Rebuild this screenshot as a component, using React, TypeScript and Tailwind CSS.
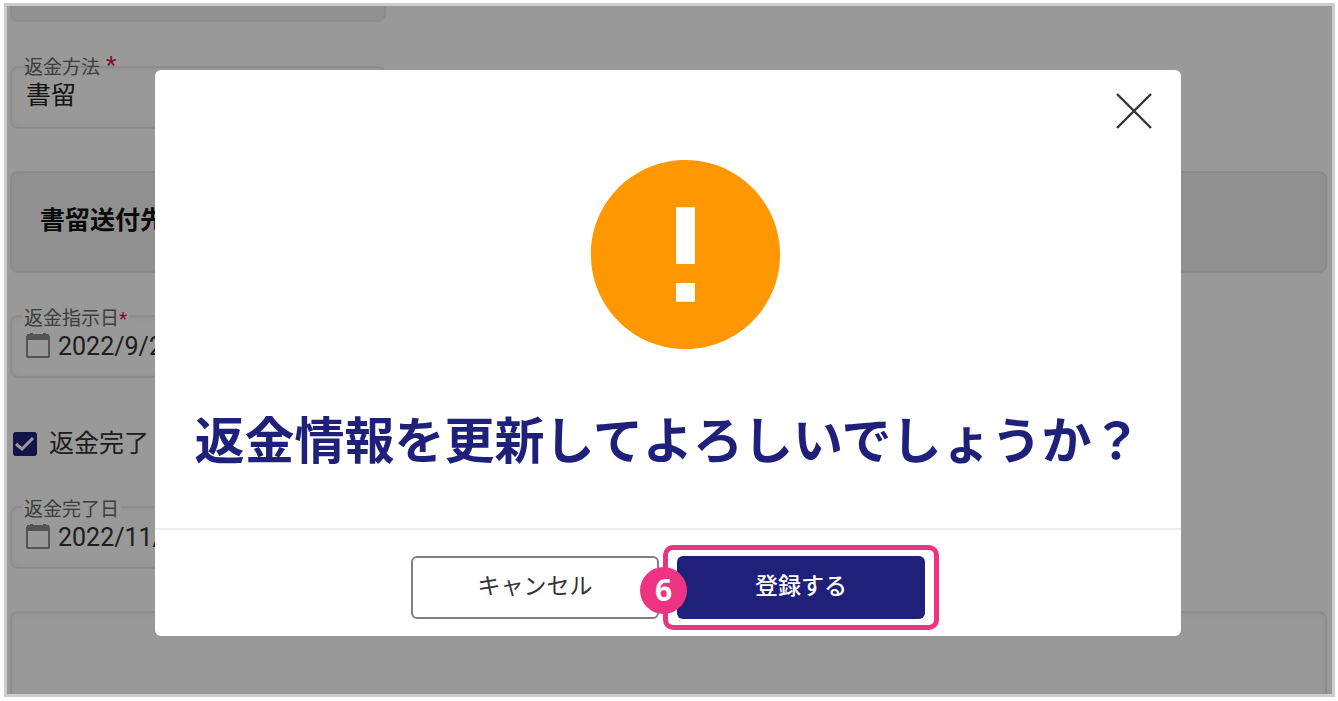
import { ReactNode } from 'react';
import { MdError } from 'react-icons/md';

interface FieldProps {
  id: string;
  label: string;
  value: string;
  required?: boolean;
}

function CalendarIcon() {
  return (
    <svg viewBox="0 0 24 28" className="h-7 w-6 shrink-0" fill="none" aria-hidden="true">
      <path d="M4 0h3v3H4zM17 0h3v3h-3z" fill="#8c8c8c" />
      <rect x="1" y="3" width="22" height="21" rx="1" stroke="#8c8c8c" strokeWidth="2" />
      <path d="M1 1h22v6H1z" fill="#8c8c8c" />
    </svg>
  );
}

function TextField({ id, label, value, required }: FieldProps) {
  return (
    <div className="relative flex h-[63px] w-[376px] items-center rounded-lg border-2 border-[#ebebeb] px-3.5 pb-1 shadow-[inset_0_0_6px_rgba(0,0,0,0.06)]">
      <label
        htmlFor={id}
        className="absolute -top-3 left-3 flex gap-1.5 text-[19px] leading-6 text-[#666]"
      >
        {label}
        {required && <span className="text-2xl leading-[18px] text-[#d8183c]">*</span>}
      </label>
      <input
        id={id}
        defaultValue={value}
        className="min-w-0 flex-1 bg-transparent text-[25px] leading-8 text-[#222] outline-none"
      />
    </div>
  );
}

function DateField({ id, label, value, required }: FieldProps) {
  return (
    <div className="relative flex h-[63px] w-[376px] items-center gap-2 rounded-lg border-2 border-[#ebebeb] px-3.5 shadow-[inset_0_0_6px_rgba(0,0,0,0.06)]">
      <label
        htmlFor={id}
        className="absolute -top-2.5 left-2.5 bg-white px-0.5 text-[19px] leading-6 text-[#666]"
      >
        {label}
        {required && <span className="text-[#d8183c]">*</span>}
      </label>
      <CalendarIcon />
      <input
        id={id}
        defaultValue={value}
        className="min-w-0 flex-1 bg-transparent text-[25px] leading-8 text-[#333] outline-none"
      />
    </div>
  );
}

function Checkbox() {
  return (
    <span className="relative h-6 w-6">
      <input
        type="checkbox"
        defaultChecked
        className="block h-6 w-6 appearance-none rounded-[3px] bg-[#1f207a]"
      />
      <svg viewBox="0 0 24 24" className="pointer-events-none absolute inset-0" fill="none">
        <path d="M3 12l6 5L20 6" stroke="#fff" strokeWidth="3" />
      </svg>
    </span>
  );
}

function RefundForm() {
  return (
    <form className="flex flex-col pr-[5px] pl-[3px]">
      <div className="h-4 w-[376px] rounded-b-lg border-2 border-t-0 border-[#ebebeb] bg-[#f2f2f2]" />
      <div className="mt-11">
        <TextField id="method" label="返金方法" value="書留" required />
      </div>
      <div className="mt-[42px] flex h-[102px] items-center rounded-lg border-2 border-[#e6e6e6] bg-[#f0f0f0] px-7 pb-0.5">
        <h2 className="text-[25px] font-bold text-[#111]">書留送付先</h2>
      </div>
      <div className="mt-[42px]">
        <DateField id="ordered" label="返金指示日" value="2022/9/27" required />
      </div>
      <label className="mt-[46px] flex h-10 items-center gap-3 px-[3px] text-[25px] text-[#333]">
        <Checkbox />
        返金完了
      </label>
      <div className="mt-[42px]">
        <DateField id="completed" label="返金完了日" value="2022/11/10" />
      </div>
      <textarea
        aria-label="備考"
        className="mt-[42px] h-40 w-full resize-none rounded-lg border-2 border-[#ebebeb] shadow-[inset_0_0_6px_rgba(0,0,0,0.06)]"
      />
    </form>
  );
}

function Highlight({ step, children }: { step: number; children: ReactNode }) {
  return (
    <div className="relative">
      {children}
      <div className="pointer-events-none absolute -inset-x-[14px] -inset-y-[11px] rounded-[10px] border-5 border-[#ec3483]" />
      <span className="absolute top-[11px] -left-[37px] flex h-[47px] w-[47px] items-center justify-center rounded-full bg-[#ec3483] pb-0.5 font-['Open_Sans'] text-[30px] font-bold text-white">
        {step}
      </span>
    </div>
  );
}

function ConfirmDialog() {
  return (
    <div
      role="dialog"
      aria-labelledby="confirm-title"
      className="relative flex w-full flex-col rounded-md bg-white"
    >
      <button type="button" aria-label="閉じる" className="absolute top-[22px] right-7 p-px">
        <svg viewBox="0 0 36 36" className="h-9 w-9" fill="none">
          <path d="M1 1l34 34M35 1L1 35" stroke="#333" strokeWidth="2.4" />
        </svg>
      </button>
      <div className="flex flex-col items-center pt-[71px] pb-[50px]">
        <MdError className="ml-[35px] h-[227px] w-[227px] text-[#ff9800]" />
        <h1
          id="confirm-title"
          className="mt-[38px] text-[50px] leading-[72px] font-bold whitespace-nowrap text-[#1f207a]"
        >
          返金情報を更新してよろしいでしょうか？
        </h1>
      </div>
      <div className="flex items-start justify-center gap-[18px] border-t-2 border-[#ebebeb] pt-[26px] pb-[17px]">
        <button
          type="button"
          className="h-[63px] w-[248px] rounded-md border-2 border-[#808080] text-[23px] text-[#333]"
        >
          キャンセル
        </button>
        <Highlight step={6}>
          <button
            type="button"
            className="h-[63px] w-[248px] rounded-md bg-[#1f207a] text-[23px] font-medium text-white"
          >
            登録する
          </button>
        </Highlight>
      </div>
    </div>
  );
}

export default function App() {
  return (
    <div className="h-screen bg-white pt-[3px] pr-[3px] pb-1 pl-1 font-[Roboto,'Noto_Sans_CJK_JP',sans-serif]">
      <div className="relative h-full overflow-hidden border-[3px] border-[#ccc] bg-white">
        <RefundForm />
        <div className="absolute inset-0 bg-black/40 pt-16 pr-[151px] pl-[148px]">
          <ConfirmDialog />
        </div>
      </div>
    </div>
  );
}
